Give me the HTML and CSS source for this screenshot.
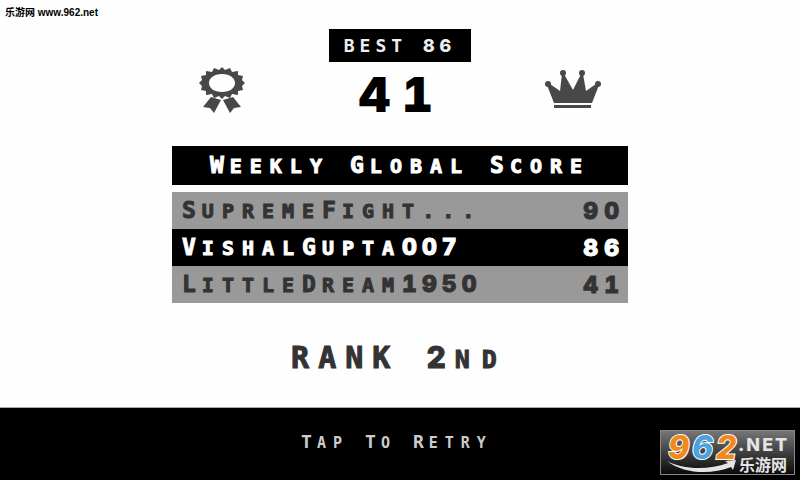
FILE: index.html
```
<!DOCTYPE html>
<html lang="en">
<head>
  <meta charset="utf-8">
  <title>Game Over</title>
  <link rel="stylesheet" href="styles.css">
</head>
<body>
  <a class="site" href="#">乐游网 www.962.net</a>

  <main class="game">
    <div class="top">
      <button class="icon" aria-label="Achievements">
        <svg width="48" height="48" viewBox="0 0 48 48">
          <path fill="#484848" fill-rule="evenodd" d="M24 1l3 3 5-2 2 4 6-1 0 4 5 1-1 4 3 3-3 3 1 4-5 1 0 4-6-1-2 4-5-2-3 3-3-3-5 2-2-4-6 1 0-4-5-1 1-4-3-3 3-3-1-4 5-1 0-4 6 1 2-4 5 2zM24 8c-8 0-13 4-13 9s5 9 13 9 13-4 13-9-5-9-13-9z"/>
          <path fill="#484848" d="M13 31l10 3-7 13-4-5-7-1zM35 31l-10 3 7 13 4-5 7-1z"/>
        </svg>
      </button>
      <div class="result">
        <div class="best">BEST <span class="num">86</span></div>
        <div class="score">41</div>
      </div>
      <button class="icon" aria-label="Leaderboard">
        <svg width="58" height="44" viewBox="0 0 58 44">
          <g fill="#484848">
            <circle cx="4" cy="18" r="3"/>
            <circle cx="19" cy="7" r="3"/>
            <circle cx="38" cy="7" r="3"/>
            <circle cx="54" cy="18" r="3"/>
            <path d="M3 19l3-1 10 7 2-17h2l9 16 8-16h2l3 17 10-7 3 1-7 18H10z"/>
            <path d="M10 39h37v3H10z"/>
          </g>
        </svg>
      </button>
    </div>

    <h1 class="title"><span class="cap">W</span>eekly <span class="cap">G</span>lobal <span class="cap">S</span>core</h1>

    <table class="scores">
      <tr>
        <td><span class="cap">S</span>upreme<span class="cap">F</span>ight...</td>
        <td class="points num">90</td>
      </tr>
      <tr class="me">
        <td><span class="cap">V</span>ishal<span class="cap">G</span>upta<span class="num">007</span></td>
        <td class="points num">86</td>
      </tr>
      <tr>
        <td><span class="cap">L</span>ittle<span class="cap">D</span>ream<span class="num">1950</span></td>
        <td class="points num">41</td>
      </tr>
    </table>

    <div class="rank"><span class="cap">Rank</span> <span class="num">2</span>nd</div>
  </main>

  <button class="retry"><span class="cap">T</span>ap <span class="cap">T</span>o <span class="cap">R</span>etry</button>

  <a class="logo" href="#" aria-label="962.net">
    <svg width="135" height="45" viewBox="0 0 135 45">
      <defs>
        <linearGradient id="plate" x1="0" y1="0" x2="0" y2="1">
          <stop offset="0" stop-color="#777"/>
          <stop offset="1" stop-color="#080808"/>
        </linearGradient>
      </defs>
      <rect x="0.5" y="0.5" width="134" height="44" fill="url(#plate)" stroke="#888"/>
      <path fill="#e4e4e4" d="M7 31c16 9 42 9 61 2l-3-2 11-1-3 10-2-3c-20 8-47 7-64-6z"/>
      <g class="logo-num">
        <text x="8" y="29" fill="#f08a1c">9</text>
        <text x="32" y="29" fill="#4aa3dc">6</text>
        <text x="56" y="29" fill="#f08a1c">2</text>
      </g>
      <text class="logo-net" x="78" y="21">.NET</text>
      <text class="logo-cn" x="79" y="41">乐游网</text>
    </svg>
  </a>
</body>
</html>
```
FILE: styles.css
```
* {
  box-sizing: border-box;
}
body {
  display: flex;
  flex-direction: column;
  min-height: 100vh;
  margin: 0;
  background-color: #fefefe;
  color: #000;
  font-family: "DejaVu Sans Mono", monospace;
  font-weight: bold;
}
button {
  border: none;
  padding: 0;
  background: none;
  color: inherit;
  font: inherit;
  cursor: pointer;
}
svg {
  display: block;
  overflow: visible;
}
.site {
  position: absolute;
  top: 6px;
  left: 5px;
  color: #000;
  font-family: "Liberation Sans", "Noto Sans CJK SC", sans-serif;
  font-size: 10px;
  line-height: 14px;
  text-decoration: none;
}
.game {
  flex: 1;
  width: 57%;
  margin: 0 auto;
  padding-top: 29px;
}
.top {
  display: flex;
  justify-content: space-between;
  padding: 0 26px;
}
.icon {
  display: flex;
  align-self: flex-start;
  width: 58px;
  margin-top: 37px;
}
.result {
  display: flex;
  flex-direction: column;
  align-items: center;
}
.best {
  padding: 0 15px;
  background-color: #000;
  color: #eee;
  font-size: 18px;
  line-height: 33px;
  letter-spacing: 5px;
}
.score {
  padding-left: 4px;
  font-family: Inter, sans-serif;
  font-size: 48px;
  font-weight: 900;
  font-variant-numeric: tabular-nums;
  line-height: 66px;
  letter-spacing: 12px;
}
.title,
.scores,
.rank {
  -webkit-text-stroke: 1px currentColor;
}
.num {
  font-family: Inter, sans-serif;
  font-weight: 800;
  font-variant-numeric: tabular-nums;
}
.title,
.scores {
  font-size: 20px;
  letter-spacing: 8px;
  text-transform: uppercase;
}
.title .cap,
.scores .cap,
.scores .num {
  font-size: 23px;
  letter-spacing: 6px;
}
.scores td .num {
  letter-spacing: 5px;
}
.title {
  margin: 18px 0 7px;
  background-color: #000;
  color: #fff;
  line-height: 38px;
  text-align: center;
  white-space: nowrap;
}
.scores {
  width: 100%;
  border-collapse: collapse;
  background-color: #999;
  color: #333;
}
.scores td {
  height: 37px;
  padding: 0 0 0 10px;
  line-height: 36px;
  white-space: nowrap;
}
.scores .points {
  padding-right: 3px;
  text-align: right;
}
.scores .me {
  background-color: #000;
  color: #fff;
}
.rank {
  margin-top: 32px;
  color: #333;
  font-size: 25px;
  line-height: 44px;
  letter-spacing: 12px;
  text-align: center;
  text-transform: uppercase;
}
.rank .cap,
.rank .num {
  font-size: 30px;
  letter-spacing: 9px;
}
.retry {
  height: 73px;
  padding: 0 6px 6px 0;
  border-top: 1px solid #aaa;
  background-color: #000;
  color: #ccc;
  font-size: 15px;
  letter-spacing: 7px;
  text-transform: uppercase;
}
.retry .cap {
  font-size: 18px;
  letter-spacing: 5px;
}
.logo {
  position: absolute;
  right: 5px;
  bottom: 5px;
}
.logo-num {
  font-family: Inter, sans-serif;
  font-size: 32px;
  font-style: italic;
  font-weight: 800;
  stroke: #fff;
  stroke-width: 2px;
  paint-order: stroke;
}
.logo-net {
  fill: #e4e4e4;
  font-family: Inter, sans-serif;
  font-size: 18px;
  font-weight: 800;
  letter-spacing: 2px;
}
.logo-cn {
  fill: #e4e4e4;
  font-family: "Noto Sans CJK SC", sans-serif;
  font-size: 16px;
  font-weight: bold;
}
```
